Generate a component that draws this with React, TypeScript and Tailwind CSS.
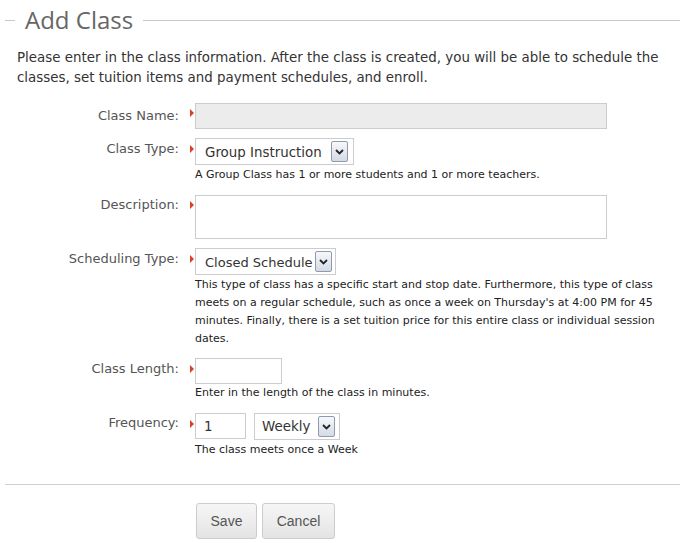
import React from "react";

const font = { fontFamily: '"DejaVu Sans", Verdana, sans-serif' };
const arial = { fontFamily: '"Liberation Sans", Arial, sans-serif' };

function Marker({ top }: { top: number }) {
  return (
    <div className="w-[6px] shrink-0 relative">
      <svg
        width="4"
        height="8"
        viewBox="0 0 4 8"
        className="absolute left-[1px]"
        style={{ top }}
      >
        <path d="M0 0 L4 4 L0 8 Z" fill="#d9412b" />
      </svg>
    </div>
  );
}

function Arrow() {
  return (
    <div className="w-[17px] h-[21px] shrink-0 border border-[#8e9ab0] rounded-[2px] bg-gradient-to-b from-[#f7f8fa] to-[#d5dae4] flex items-center justify-center">
      <svg width="9" height="6" viewBox="0 0 9 6">
        <path d="M1 1 L4.5 4.5 L8 1" stroke="#1f2530" strokeWidth="1.8" fill="none" />
      </svg>
    </div>
  );
}

function Label({ children, pt }: { children: React.ReactNode; pt: string }) {
  return (
    <div className={`w-[189px] shrink-0 pr-[10px] text-right text-[13px] leading-[20px] text-[#555] whitespace-nowrap ${pt}`}>
      {children}
    </div>
  );
}

export default function App() {
  return (
    <div className="w-[683px] h-[543px] bg-white text-[#333] overflow-hidden" style={font}>
      <div className="flex items-center pl-[5px] pr-[3px] pt-[2px] h-[38px]">
        <div className="w-[10px] h-px bg-[#c8c8c8]" />
        <div
          className="px-[10px] text-[24px] leading-[30px] text-[#666]"
          style={{ fontFamily: '"Open Sans", "Noto Sans", sans-serif' }}
        >
          Add Class
        </div>
        <div className="flex-1 h-px bg-[#c8c8c8]" />
      </div>

      <p className="pl-[17px] pr-[12px] mt-[10px] text-[13.4px] leading-[20px] text-[#333]">
        Please enter in the class information. After the class is created, you will be able to schedule the
        classes, set tuition items and payment schedules, and enroll.
      </p>

      {/* Class Name */}
      <div className="flex mt-[15px]">
        <Label pt="pt-[3px]">Class Name:</Label>
        <Marker top={6} />
        <div className="w-[412px] h-[26px] border border-[#ccc] bg-[#ececec]" />
      </div>

      {/* Class Type */}
      <div className="flex mt-[9px]">
        <Label pt="pt-[1px]">Class Type:</Label>
        <Marker top={7} />
        <div>
          <div className="w-[159px] h-[27px] border border-[#ccc] bg-white flex items-center pl-[9px] pr-[5px] justify-between text-[13.4px] text-[#333] whitespace-nowrap">
            <span className="pt-[3px]">Group Instruction</span>
            <Arrow />
          </div>
          <div className="text-[11px] leading-[18px] mt-[1px] text-[#222]">
            A Group Class has 1 or more students and 1 or more teachers.
          </div>
        </div>
      </div>

      {/* Description */}
      <div className="flex mt-[11px]">
        <Label pt="pt-[0px]">Description:</Label>
        <Marker top={6} />
        <div className="w-[412px] h-[44px] border border-[#ccc] bg-white" />
      </div>

      {/* Scheduling Type */}
      <div className="flex mt-[9px]">
        <Label pt="pt-[1px]">Scheduling Type:</Label>
        <Marker top={7} />
        <div>
          <div className="w-[141px] h-[27px] border border-[#ccc] bg-white flex items-center pl-[9px] pr-[3px] justify-between text-[13px] text-[#333] whitespace-nowrap overflow-hidden">
            <span className="pt-[2px]">Closed Schedule</span>
            <Arrow />
          </div>
          <div className="w-[474px] text-[11px] leading-[18px] mt-[1px] text-[#222]">
            This type of class has a specific start and stop date. Furthermore, this type of class meets on a
            regular schedule, such as once a week on Thursday's at 4:00 PM for 45 minutes. Finally, there is a
            set tuition price for this entire class or individual session dates.
          </div>
        </div>
      </div>

      {/* Class Length */}
      <div className="flex mt-[10px]">
        <Label pt="pt-[1px]">Class Length:</Label>
        <Marker top={7} />
        <div>
          <div className="w-[87px] h-[26px] border border-[#ccc] bg-white" />
          <div className="text-[11px] leading-[18px] mt-[0px] text-[#222]">
            Enter in the length of the class in minutes.
          </div>
        </div>
      </div>

      {/* Frequency */}
      <div className="flex mt-[11px]">
        <Label pt="pt-[0px]">Frequency:</Label>
        <Marker top={7} />
        <div>
          <div className="flex gap-[8px]">
            <div className="w-[51px] h-[26px] border border-[#ccc] bg-white flex items-center pl-[8px] pt-[3px] text-[13.4px] text-[#333]">
              1
            </div>
            <div className="w-[86px] h-[27px] border border-[#ccc] bg-white flex items-center pl-[7px] pr-[4px] justify-between text-[13.4px] text-[#333] whitespace-nowrap">
              <span className="pt-[2px]">Weekly</span>
              <Arrow />
            </div>
          </div>
          <div className="text-[11px] leading-[18px] mt-[1px] text-[#222]">The class meets once a Week</div>
        </div>
      </div>

      <div className="mx-[5px] mr-[3px] mt-[25px] h-px bg-[#cfcfcf]" />

      <div className="flex gap-[5px] pl-[196px] mt-[18px]" style={arial}>
        <button className="w-[61px] h-[36px] border border-[#ccc] rounded-[3px] bg-gradient-to-b from-[#f6f6f6] to-[#e4e4e4] text-[14px] text-[#555]">
          Save
        </button>
        <button className="w-[73px] h-[36px] border border-[#ccc] rounded-[3px] bg-gradient-to-b from-[#f6f6f6] to-[#e4e4e4] text-[14px] text-[#555]">
          Cancel
        </button>
      </div>
    </div>
  );
}
